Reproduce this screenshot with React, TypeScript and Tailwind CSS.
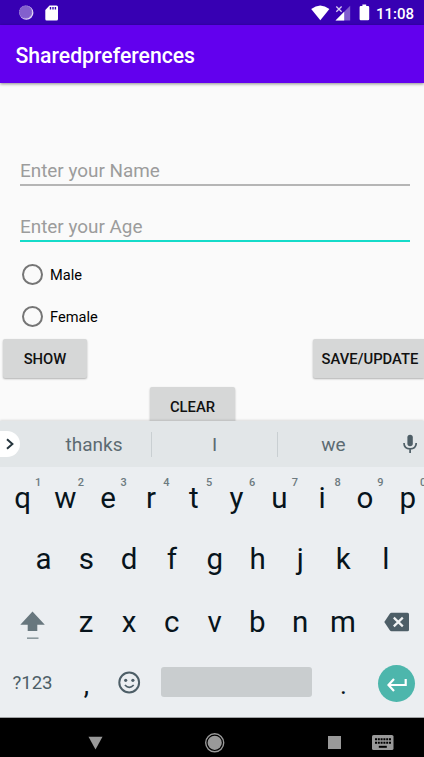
import React from "react";

const topRow = ["q", "w", "e", "r", "t", "y", "u", "i", "o", "p"];
const middleRow = ["a", "s", "d", "f", "g", "h", "j", "k", "l"];
const bottomRow = ["z", "x", "c", "v", "b", "n", "m"];

function Key({ label, hint }: { label: string; hint?: string }) {
  return (
    <div className="relative flex h-full w-[42.8px] shrink-0 items-center justify-center pr-[0.5px] pt-[2px] text-[29.5px] text-[#07141c]">
      {label}
      {hint && (
        <span className="absolute left-[33.5px] top-[9px] text-[11px] font-medium leading-[13px] text-[#6d7a80]">
          {hint}
        </span>
      )}
    </div>
  );
}

function StatusBar() {
  return (
    <header className="flex h-[25px] shrink-0 items-center bg-[#3700b3] text-white">
      <svg className="ml-[19px] h-[16px] w-[16px]" viewBox="0 0 16 16">
        <circle cx="7.4" cy="7.8" r="7" fill="#e4daf7" />
        <circle cx="6.6" cy="7" r="6.6" fill="#8360cd" />
        <circle cx="6.6" cy="7" r="6.2" fill="none" stroke="#a78dde" strokeWidth="0.8" strokeDasharray="1 1.5" />
      </svg>
      <svg className="ml-[10px] h-[16px] w-[13px]" viewBox="0 0 13 16">
        <path d="M4.5 0.5H11.5Q13 0.5 13 2V14Q13 15.5 11.5 15.5H1.7Q0.3 15.5 0.3 14V5Z" fill="white" />
        <path d="M5.5 2V4.6M8 2V4.6M10.4 2V4.6" stroke="#3700b3" strokeWidth="1.4" />
      </svg>
      <div className="flex-1" />
      <svg className="h-[16px] w-[19px]" viewBox="0 0 19 16">
        <path d="M0.2 4Q9.2 -3 18.4 4L9.3 15.3Z" fill="white" />
      </svg>
      <svg className="ml-[5px] h-[16px] w-[16px]" viewBox="0 0 16 16">
        <path d="M15.2 0.8V15.5H0.5Z" fill="#805bce" />
        <path d="M9.2 6.8V15.5H0.5Z" fill="white" />
        <path d="M1.3 1.5L6.6 6.8M6.6 1.5L1.3 6.8" stroke="#d7ccf0" strokeWidth="1.3" />
      </svg>
      <svg className="ml-[8px] h-[17px] w-[11px]" viewBox="0 0 11 17">
        <path d="M3.4 0.5H7.2V2H9Q10.2 2 10.2 3.2V15Q10.2 16.3 9 16.3H1.8Q0.6 16.3 0.6 15V3.2Q0.6 2 1.8 2H3.4Z" fill="white" />
      </svg>
      <span className="ml-[6px] mr-[10px] mt-[2px] w-[38px] whitespace-nowrap text-[15px] font-medium leading-[18px]">11:08</span>
    </header>
  );
}

function Field({ hint, focused }: { hint: string; focused?: boolean }) {
  return (
    <div className={focused ? "ml-5 mr-[14px] h-[56px] border-b-2 border-[#15dbc9] pt-[30px]" : "ml-5 mr-[14px] h-[30px] border-b-2 border-[#b5b5b5] pt-[4px]"}>
      <div className="text-[18.9px] leading-[22px] text-[#9c9c9c]">{hint}</div>
    </div>
  );
}

function Radio({ label }: { label: string }) {
  return (
    <label className="flex h-[42px] items-center gap-[7px] pl-[22px] text-[14.6px] text-black">
      <span className="h-[21px] w-[21px] rounded-full border-2 border-[#757575]" />
      <span className="pt-[3px]">{label}</span>
    </label>
  );
}

function Suggestions() {
  return (
    <div className="flex h-[46px] shrink-0 items-center bg-[#e2e6e8] text-[19px] text-[#5c6b72]">
      <div className="flex h-[26px] w-5 items-center rounded-r-full bg-white">
        <svg className="ml-[5px] h-3 w-[10px]" viewBox="0 0 10 12">
          <path d="M2 1.2L7.4 6L2 10.8" fill="none" stroke="#26363e" strokeWidth="2" />
        </svg>
      </div>
      <div className="ml-[17px] flex h-[25px] w-[115px] items-center justify-center border-r border-[#c9cfd2] pt-[3px]">thanks</div>
      <div className="flex h-[25px] w-[126px] items-center justify-center border-r border-[#c9cfd2] pt-[3px]">I</div>
      <div className="flex h-[25px] w-[111px] items-center justify-center pt-[3px]">we</div>
      <svg className="ml-[14px] h-5 w-[14px]" viewBox="0 0 14 20">
        <rect x="4.4" y="0.7" width="5.4" height="11.6" rx="2.7" fill="#4e5e66" />
        <path d="M1 9Q1 14.8 7.1 14.8Q13.2 14.8 13.2 9M7.1 15V19" fill="none" stroke="#4e5e66" strokeWidth="1.7" />
      </svg>
    </div>
  );
}

function Keyboard() {
  return (
    <section className="flex h-[297px] shrink-0 flex-col border-b border-[#a0a2a4] bg-[#ebeef1] shadow-[0_-1px_2px_rgba(0,0,0,0.12)]">
      <Suggestions />
      <div className="flex h-[61px] pl-[1.4px]">
        {topRow.map((key, i) => (
          <Key key={key} label={key} hint={String((i + 1) % 10)} />
        ))}
      </div>
      <div className="flex h-[62px] pb-px pl-[22.4px]">
        {middleRow.map((key) => (
          <Key key={key} label={key} />
        ))}
      </div>
      <div className="flex h-[62px]">
        <div className="flex w-[65px] items-center justify-center">
          <svg className="mt-[9px] h-[30px] w-[25px]" viewBox="0 0 25 30">
            <path d="M12.5 0.5L24.8 13.8H17.3V20H7.7V13.8H0.3Z" fill="#68777e" />
            <path d="M7 27.2H18.5" stroke="#8c999e" strokeWidth="1.6" />
          </svg>
        </div>
        {bottomRow.map((key) => (
          <Key key={key} label={key} />
        ))}
        <svg className="ml-[19px] mt-[22px] h-[20px] w-[26px]" viewBox="0 0 26 20">
          <path d="M7.5 0.8H23.5Q25 0.8 25 2.3V17.7Q25 19.2 23.5 19.2H7.5Q6.5 19.2 5.8 18.2L0.3 10L5.8 1.8Q6.5 0.8 7.5 0.8Z" fill="#4d5e67" />
          <path d="M9.8 5.6L18.8 14.4M18.8 5.6L9.8 14.4" stroke="#f0f2f3" strokeWidth="2.2" />
        </svg>
      </div>
      <div className="flex h-[65px]">
        <div className="flex w-[65px] items-center justify-center pb-[2px] text-[18.6px] text-[#4d5e67]">?123</div>
        <div className="flex w-[43px] items-center justify-center pt-px text-[27px] text-[#07141c]">,</div>
        <div className="flex w-[43px] justify-center pt-[19px]">
          <svg className="h-[23px] w-[23px]" viewBox="0 0 23 23" fill="none" stroke="#4d5e67">
            <circle cx="11.2" cy="11.5" r="9.9" strokeWidth="2" />
            <circle cx="7.7" cy="9.3" r="1.6" fill="#4d5e67" stroke="none" />
            <circle cx="14.9" cy="9.3" r="1.6" fill="#4d5e67" stroke="none" />
            <path d="M6.9 14Q11.3 18.6 15.7 14" strokeWidth="1.7" />
          </svg>
        </div>
        <div className="ml-[10px] mt-[15px] h-[30px] w-[151px] rounded-[3px] bg-[#c9cdcf]" />
        <div className="ml-[10px] flex w-[43px] items-center justify-center pt-px text-[26px] text-[#07141c]">.</div>
        <div className="ml-[13px] mt-[13px] flex h-[37px] w-[37px] items-center justify-center rounded-full bg-[#4db6ac]">
          <svg className="mt-[2px] h-[14px] w-[20px]" viewBox="0 0 20 14" fill="none" stroke="white" strokeWidth="2.2">
            <path d="M7 1L1.5 7L7 13M1.5 7H18.7V1" />
          </svg>
        </div>
      </div>
    </section>
  );
}

function NavigationBar() {
  return (
    <nav className="flex h-[39px] shrink-0 items-center bg-black pt-[10px]">
      <svg className="ml-[88px] h-[14px] w-[15px]" viewBox="0 0 15 14">
        <path d="M0.5 0.8H14.5L7.5 13.5Z" fill="#999" />
      </svg>
      <svg className="ml-[102px] h-5 w-5" viewBox="0 0 20 20">
        <circle cx="9.7" cy="9.8" r="9" fill="none" stroke="#999" strokeWidth="1.4" />
        <circle cx="9.7" cy="9.8" r="7.1" fill="#999" />
      </svg>
      <div className="ml-[103px] h-[13px] w-[13px] bg-[#999]" />
      <svg className="ml-[31px] h-[15px] w-[22px]" viewBox="0 0 22 15">
        <rect width="21.5" height="15" rx="1.6" fill="#999" />
        <path d="M3 4.2H19M3 7.7H19" stroke="black" strokeWidth="2" strokeDasharray="2 0.8" />
        <path d="M6.8 11.8H14.8" stroke="black" strokeWidth="2" />
      </svg>
    </nav>
  );
}

export default function App() {
  return (
    <div className="flex h-[757px] w-[424px] flex-col overflow-hidden bg-[#fafafa] font-['Roboto',sans-serif]">
      <StatusBar />
      <div className="flex h-[58px] shrink-0 items-center bg-[#6200ee] pl-[15.5px] pt-[4px] text-[21.2px] font-medium text-white shadow-[0_1px_3px_rgba(0,0,0,0.45)]">
        Sharedpreferences
      </div>
      <main className="h-[338px] shrink-0 overflow-hidden pt-[73px]">
        <Field hint="Enter your Name" />
        <Field hint="Enter your Age" focused />
        <div className="mt-[11px]">
          <Radio label="Male" />
          <Radio label="Female" />
        </div>
        <div className="mt-[2px] flex justify-between pl-[3px] text-[14.8px] font-medium text-[#111]">
          <button className="h-[39px] w-[84px] rounded-[2px] bg-[#d6d7d7] pt-[2px] shadow-[0_1px_2px_rgba(0,0,0,0.3)]">SHOW</button>
          <button className="h-[39px] w-[111px] rounded-l-[2px] bg-[#d6d7d7] pl-[3px] pt-[2px] shadow-[0_1px_2px_rgba(0,0,0,0.3)]">SAVE/UPDATE</button>
        </div>
        <button className="ml-[150px] mt-[9px] h-[39px] w-[85px] rounded-[2px] bg-[#d6d7d7] pt-[2px] text-[14.8px] font-medium text-[#111] shadow-[0_1px_2px_rgba(0,0,0,0.3)]">CLEAR</button>
      </main>
      <Keyboard />
      <NavigationBar />
    </div>
  );
}
